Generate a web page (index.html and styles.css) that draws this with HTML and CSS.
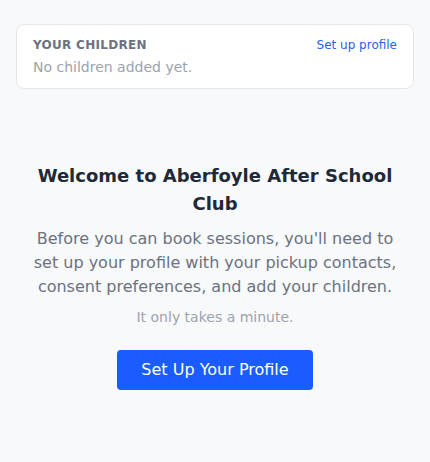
FILE: index.html
```html
<!DOCTYPE html>
<html lang="en">
<head>
<meta charset="utf-8">
<link rel="stylesheet" href="styles.css">
</head>
<body>
<div class="page">
  <section class="card">
    <div class="card-head">
      <h2 class="card-title">Your Children</h2>
      <a class="card-link" href="#">Set up profile</a>
    </div>
    <p class="card-empty">No children added yet.</p>
  </section>
  <section class="welcome">
    <h1 class="welcome-title">Welcome to Aberfoyle After School Club</h1>
    <p class="welcome-text">Before you can book sessions, you'll need to set up your profile with your pickup contacts, consent preferences, and add your children.</p>
    <p class="welcome-note">It only takes a minute.</p>
    <button class="btn-primary" type="button">Set Up Your Profile</button>
  </section>
</div>
</body>
</html>
```
FILE: styles.css
```css
html, body {
  margin: 0;
  padding: 0;
  background: #f8f9fb;
  font-family: "DejaVu Sans", sans-serif;
}
.page {
  padding: 24px 16px;
}
.card {
  background: #fff;
  border: 1px solid #e5e7eb;
  border-radius: 8px;
  padding: 12px 16px 11px;
}
.card-head {
  display: flex;
  justify-content: space-between;
  align-items: center;
}
.card-title {
  margin: 0;
  font-size: 12px;
  line-height: 16px;
  font-weight: bold;
  text-transform: uppercase;
  letter-spacing: 0.3px;
  color: #6b7280;
}
.card-link {
  font-size: 12px;
  line-height: 16px;
  color: #2563eb;
  text-decoration: none;
}
.card-empty {
  margin: 4px 0 0;
  font-size: 14px;
  line-height: 20px;
  color: #9ca3af;
}
.welcome {
  text-align: center;
  padding: 73px 16px 0;
  display: flex;
  flex-direction: column;
  align-items: center;
}
.welcome-title {
  margin: 0 0 9px;
  font-size: 18px;
  line-height: 28px;
  font-weight: bold;
  color: #1f2937;
}
.welcome-text {
  margin: 0 0 8px;
  font-size: 16px;
  line-height: 24px;
  color: #6b7280;
}
.welcome-note {
  margin: 0 0 23px;
  font-size: 14px;
  line-height: 20px;
  color: #9ca3af;
}
.btn-primary {
  font-family: inherit;
  background: #1a5cff;
  color: #fff;
  border: none;
  border-radius: 4px;
  font-size: 16px;
  line-height: 24px;
  padding: 8px 24px;
  cursor: pointer;
}
```
